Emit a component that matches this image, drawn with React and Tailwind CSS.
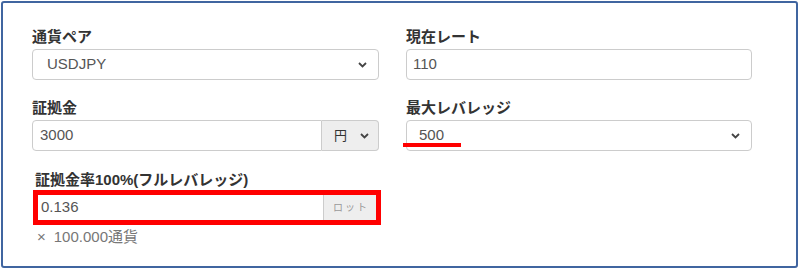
function Chevron() {
  return (
    <svg width="9" height="6" viewBox="0 0 9 6" className="shrink-0">
      <path d="M1 1 L4.5 4.5 L8 1" fill="none" stroke="#444" strokeWidth="1.8" />
    </svg>
  )
}

function Label({ children }) {
  return <div className="text-[15px] leading-[20px] font-bold text-[#333] mb-[2px]">{children}</div>
}

function SelectBox({ value, textPad }) {
  return (
    <div className="h-[31px] border border-[#ccc] rounded-[4px] bg-white flex items-center justify-between pr-[11px] text-[15px] text-[#555]">
      <span className={textPad}>{value}</span>
      <Chevron />
    </div>
  )
}

export default function App() {
  return (
    <div
      className="m-[1px] w-[797px] h-[267px] border-2 border-[#4065a0] rounded-[3px] bg-white"
      style={{ fontFamily: '"Liberation Sans", "Noto Sans CJK JP", sans-serif' }}
    >
      <div className="pl-[29px] pt-[24px] grid grid-cols-[347px_346px] gap-x-[27px]">
        <div className="mb-[18px]">
          <Label>通貨ペア</Label>
          <SelectBox value="USDJPY" textPad="pl-[14px]" />
        </div>
        <div className="mb-[18px]">
          <Label>現在レート</Label>
          <div className="h-[31px] border border-[#ccc] rounded-[4px] flex items-center pl-[6px] text-[15px] text-[#555]">110</div>
        </div>

        <div className="mb-[19px]">
          <Label>証拠金</Label>
          <div className="h-[31px] flex">
            <div className="flex-1 border border-[#ccc] rounded-l-[4px] flex items-center pl-[7px] text-[15px] text-[#555]">3000</div>
            <div className="w-[57px] border border-l-0 border-[#ccc] rounded-r-[4px] bg-[#eee] flex items-center justify-between pl-[12px] pr-[9px] text-[13px] text-[#333]">
              <span>円</span>
              <Chevron />
            </div>
          </div>
        </div>
        <div className="mb-[19px] relative">
          <Label>最大レバレッジ</Label>
          <SelectBox value="500" textPad="pl-[12px]" />
          <div className="absolute left-[-3px] top-[45px] w-[58px] h-[4px] bg-[#f00]" />
        </div>

        <div className="pl-[3px]">
          <Label>証拠金率100%(フルレバレッジ)</Label>
          <div className="relative h-[31px] flex">
            <div className="flex-1 border border-[#ccc] rounded-l-[4px] flex items-center pl-[5px] text-[15px] text-[#555]">0.136</div>
            <div className="w-[55px] border border-l-0 border-[#ccc] rounded-r-[4px] bg-[#eee] flex items-center justify-center text-[10px] tracking-[2px] text-[#999]">ロット</div>
            <div className="absolute left-[-2px] top-[-2px] right-[-2px] bottom-[-2px] border-[5px] border-[#f00]" />
          </div>
          <div className="mt-[6px] pl-[2px] text-[15px] leading-[16px] text-[#777] flex">
            <span>×</span>
            <span className="ml-[8px]">100.000通貨</span>
          </div>
        </div>
      </div>
    </div>
  )
}
